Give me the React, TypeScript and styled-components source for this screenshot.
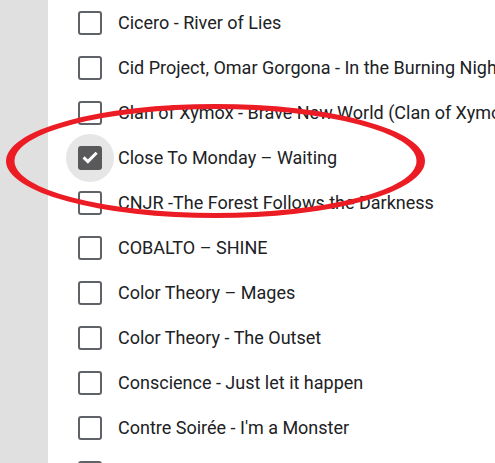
import React from 'react';
import styled, { createGlobalStyle } from 'styled-components';

const GlobalStyle = createGlobalStyle`
  html, body {
    margin: 0;
    padding: 0;
    background: #ffffff;
    overflow: hidden;
  }
`;

const Page = styled.div`
  position: relative;
  display: flex;
  width: 495px;
  height: 463px;
  overflow: hidden;
  font-family: Roboto, 'Liberation Sans', sans-serif;
`;

const Sidebar = styled.div`
  width: 48px;
  flex-shrink: 0;
  background-color: #e0e0e0;
`;

const List = styled.ul`
  list-style: none;
  margin: 0;
  padding: 0 0 0 18px;
  flex: 1;
  min-width: 0;
`;

const Row = styled.li`
  display: flex;
  align-items: center;
  height: 45px;
`;

const CheckWrap = styled.span<{ $checked?: boolean }>`
  width: 48px;
  height: 48px;
  margin-right: 4px;
  flex-shrink: 0;
  display: flex;
  align-items: center;
  justify-content: center;
  border-radius: 50%;
  background-color: ${(p) => (p.$checked ? '#e6e6e6' : 'transparent')};
`;

const Box = styled.span<{ $checked?: boolean }>`
  position: relative;
  box-sizing: border-box;
  width: 24px;
  height: 24px;
  border-radius: 3px;
  border: 2.5px solid;
  border-color: ${(p) => (p.$checked ? '#59595b' : '#5f6368')};
  background-color: ${(p) => (p.$checked ? '#59595b' : '#ffffff')};
`;

const Tick = styled.svg`
  position: absolute;
  left: -2.5px;
  top: -2.5px;
`;

const Label = styled.span`
  font-size: 18px;
  line-height: 1;
  color: #202124;
  white-space: nowrap;
`;

const Annotation = styled.svg`
  position: absolute;
  left: 0;
  top: 0;
  pointer-events: none;
`;

const songs = [
  'Cicero - River of Lies',
  'Cid Project, Omar Gorgona - In the Burning Night',
  'Clan of Xymox - Brave New World (Clan of Xymox Remix)',
  'Close To Monday \u2013 Waiting',
  'CNJR -The Forest Follows the Darkness',
  'COBALTO \u2013 SHINE',
  'Color Theory \u2013 Mages',
  'Color Theory - The Outset',
  'Conscience - Just let it happen',
  "Contre Soir\u00e9e - I'm a Monster",
  'Covenant - Lightbringer',
];

const checkedIndex = 3;

const App: React.FC = () => {
  return (
    <>
      <GlobalStyle />
      <Page>
        <Sidebar />
        <List>
          {songs.map((title, i) => {
            const checked = i === checkedIndex;
            return (
              <Row key={title}>
                <CheckWrap $checked={checked}>
                  <Box $checked={checked}>
                    {checked && (
                      <Tick width="24" height="24" viewBox="0 0 24 24">
                        <path
                          d="M5.6 12.4 L9.9 16.6 L18.6 7.8"
                          fill="none"
                          stroke="#ffffff"
                          strokeWidth="3"
                        />
                      </Tick>
                    )}
                  </Box>
                </CheckWrap>
                <Label>{title}</Label>
              </Row>
            );
          })}
        </List>
        {/* red hand-drawn ring over the checked row */}
        <Annotation width="495" height="463" viewBox="0 0 495 463">
          <path
            fillRule="evenodd"
            fill="#ec1c24"
            d="M6 161 a209.5 57 0 1 0 419 0 a209.5 57 0 1 0 -419 0 Z M14.5 161 a201 52 0 1 0 402 0 a201 52 0 1 0 -402 0 Z"
          />
        </Annotation>
      </Page>
    </>
  );
};

export default App;
